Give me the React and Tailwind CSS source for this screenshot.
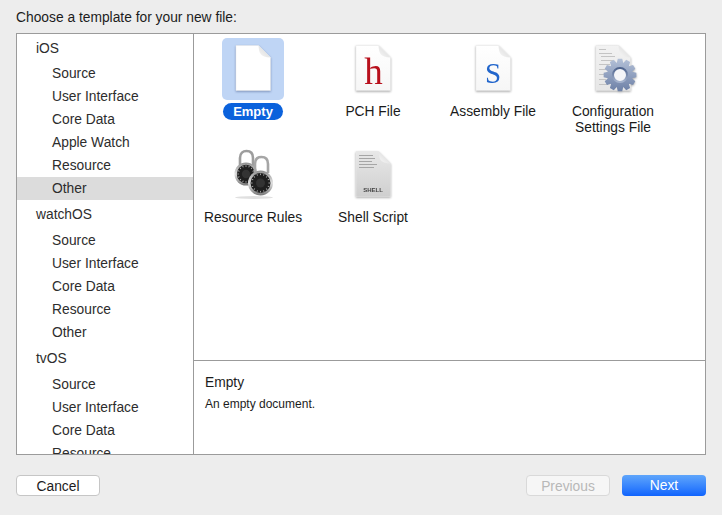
import { useState } from "react";

const font = "font-['Liberation_Sans',Arial,sans-serif]";

const sections = [
  { title: "iOS", header: "h-[28px] pt-[2px]", items: ["Source", "User Interface", "Core Data", "Apple Watch", "Resource", "Other"] },
  { title: "watchOS", header: "h-[29px] pt-[1px]", items: ["Source", "User Interface", "Core Data", "Resource", "Other"] },
  { title: "tvOS", header: "h-[29px] pt-[1px]", items: ["Source", "User Interface", "Core Data", "Resource"] },
];

// Shared sheet of paper with a folded corner
function Sheet({ id, top = "#ffffff", bottom = "#ffffff", shadow = "drop-shadow-[0_1px_1px_rgba(0,0,0,0.35)]", children }) {
  return (
    <svg width="48" height="48" viewBox="0 0 48 48" className={shadow}>
      <defs>
        <linearGradient id={id} x1="0" y1="0" x2="0" y2="1">
          <stop offset="0" stopColor={top} />
          <stop offset="1" stopColor={bottom} />
        </linearGradient>
        <linearGradient id={`${id}-fold`} x1="0" y1="1" x2="1" y2="0">
          <stop offset="0" stopColor="#f8f8f8" />
          <stop offset="1" stopColor="#d4d4d4" />
        </linearGradient>
      </defs>
      <path d="M7 .5H29.5L41.5 12.5V45.5H7Z" fill={`url(#${id})`} stroke="#e8e8e8" strokeWidth=".5" />
      <path d="M29.5 .5C30 8 31 12 41.5 12.5Z" fill={`url(#${id}-fold)`} />
      {children}
    </svg>
  );
}

function gearPath(cx, cy, outer, inner, teeth) {
  const pts = [];
  const step = (Math.PI * 2) / teeth;
  for (let i = 0; i < teeth; i++) {
    const a = i * step;
    const offs = [
      [-0.5, inner],
      [-0.26, outer],
      [0.26, outer],
      [0.5, inner],
    ];
    offs.forEach(([o, r]) => {
      const t = a + o * step;
      pts.push(`${(cx + Math.cos(t) * r).toFixed(2)} ${(cy + Math.sin(t) * r).toFixed(2)}`);
    });
  }
  return `M${pts.join("L")}Z`;
}

function TextLines({ rows, color = "#c4c4c4" }) {
  return rows.map(([x, y, w], i) => (
    <rect key={i} x={x} y={y} width={w} height="1" fill={color} />
  ));
}

function ConfigIcon() {
  return (
    <Sheet id="cfg" top="#f2f2f2" bottom="#e6e6e6">
      <TextLines
        rows={[
          [10, 4, 7], [10, 8, 13], [12, 11, 14], [12, 15, 12], [10, 19, 11],
          [10, 24, 7], [10, 29, 6], [10, 34, 7], [10, 39, 9],
        ]}
      />
      <defs>
        <linearGradient id="gear" x1="0" y1="0" x2="0" y2="1">
          <stop offset="0" stopColor="#b4c1d8" />
          <stop offset="1" stopColor="#6d80a6" />
        </linearGradient>
        <linearGradient id="gearRing" x1="0" y1="0" x2="0" y2="1">
          <stop offset="0" stopColor="#4d628c" />
          <stop offset="1" stopColor="#a7b5cf" />
        </linearGradient>
      </defs>
      <path d={gearPath(31, 30, 16.5, 12.5, 12)} fill="url(#gear)" />
      <circle cx="31" cy="30" r="7" fill="#f4f5f8" stroke="url(#gearRing)" strokeWidth="2" />
    </Sheet>
  );
}

function Dial({ cx, cy, r, id }) {
  const ticks = [...Array(16)];
  return (
    <g>
      <circle cx={cx} cy={cy} r={r} fill={`url(#${id})`} />
      <circle cx={cx} cy={cy} r={r * 0.8} fill="#1f1f1f" />
      {ticks.map((_, i) => (
        <rect
          key={i}
          x={cx - 0.4}
          y={cy - r * 0.76}
          width=".8"
          height="1.6"
          fill="#bdbdbd"
          transform={`rotate(${i * 22.5} ${cx} ${cy})`}
        />
      ))}
      <circle cx={cx} cy={cy} r={r * 0.36} fill="#333333" />
    </g>
  );
}

function LocksIcon() {
  return (
    <svg width="48" height="48" viewBox="0 0 48 48" className="overflow-visible">
      <defs>
        <linearGradient id="dialRim" x1="0" y1="0" x2="0" y2="1">
          <stop offset="0" stopColor="#8f8f8f" />
          <stop offset=".5" stopColor="#e2e2e2" />
          <stop offset="1" stopColor="#777777" />
        </linearGradient>
      </defs>
      <ellipse cx="25" cy="46.5" rx="19" ry="1.5" fill="#e0e0e0" />
      <path d="M11 18V7C11 2 14 0 17.500 0S24 2 24 7V16" fill="none" stroke="#9d9d9d" strokeWidth="2.6" />
      <Dial cx={17} cy={23} r={11.500} id="dialRim" />
      <path d="M26 26V13C26 8 29 6 32.500 6S39 8 39 13V22" fill="none" stroke="#a6a6a6" strokeWidth="2.6" />
      <Dial cx={31.500} cy={32} r={12.500} id="dialRim" />
    </svg>
  );
}

const templates = [
  {
    name: ["Empty"],
    icon: <Sheet id="empty" shadow="drop-shadow-[0_1px_1px_rgba(40,60,110,0.45)]" />,
  },
  {
    name: ["PCH File"],
    icon: (
      <Sheet id="pch" top="#ffffff" bottom="#f6f6f6">
        <text x="24.500" y="39" textAnchor="middle" fontSize="37" fontFamily="Liberation Serif, serif" fill="#b8101c">h</text>
      </Sheet>
    ),
  },
  {
    name: ["Assembly File"],
    icon: (
      <Sheet id="asm" top="#ffffff" bottom="#f6f6f6">
        <text x="24" y="38" textAnchor="middle" fontSize="29" fontFamily="Liberation Serif, serif" fill="#2266cc">S</text>
      </Sheet>
    ),
  },
  { name: ["Configuration", "Settings File"], icon: <ConfigIcon /> },
  { name: ["Resource Rules"], icon: <LocksIcon /> },
  {
    name: ["Shell Script"],
    icon: (
      <Sheet id="shell" top="#e8e8e8" bottom="#cfcfcf">
        <TextLines rows={[[10, 4, 14], [10, 7, 16], [10, 10, 13], [10, 13, 18], [10, 16, 15]]} color="#a6a6a6" />
        <text x="24" y="41" textAnchor="middle" fontSize="6" fontWeight="bold" fontFamily="Liberation Sans, sans-serif" fill="#444444">SHELL</text>
      </Sheet>
    ),
  },
];

function Sidebar() {
  return (
    <div className="w-[177px] shrink-0 h-full overflow-hidden border-r border-[#9b9b9b] text-[13.8px] text-[#2d2d2d]">
      {sections.map((section, s) => (
        <div key={section.title}>
          <div className={`${section.header} pl-[19px] flex items-center`}>{section.title}</div>
          {section.items.map((item) => (
            <div
              key={item}
              className={`h-[23px] pl-[35px] pt-[2px] flex items-center ${
                s === 0 && item === "Other" ? "bg-[#dcdcdc]" : ""
              }`}
            >
              {item}
            </div>
          ))}
        </div>
      ))}
    </div>
  );
}

function TemplateTile({ template, selected, onSelect }) {
  return (
    <button onClick={onSelect} className="w-[120px] h-[106px] flex flex-col items-center text-[13.8px] leading-4 text-[#1a1a1a]">
      <div className={`w-[62px] h-[62px] mt-[4px] rounded-[5px] flex justify-center pt-[7px] ${selected ? "bg-[#bfd5f5]" : ""}`}>
        {template.icon}
      </div>
      <div className="mt-[3px] text-center">
        {template.name.map((line) => (
          <div
            key={line}
            className={
              selected
                ? "w-[60px] h-[17px] leading-[17px] rounded-full bg-[#0b62dc] text-white text-[13px] font-bold"
                : "h-4 first:mt-[1px] whitespace-nowrap"
            }
          >
            {line}
          </div>
        ))}
      </div>
    </button>
  );
}

export default function App() {
  const [selected, setSelected] = useState(0);

  return (
    <div className={`w-[722px] h-[515px] bg-[#ededed] px-4 flex flex-col overflow-hidden ${font}`}>
      <div className="h-[33px] pt-[10px] text-[13.8px] leading-4 text-[#1c1c1c]">Choose a template for your new file:</div>

      <div className="h-[422px] border border-[#9b9b9b] bg-white flex">
        <Sidebar />
        <div className="flex-1 flex flex-col min-w-0">
          <div className="h-[326px] -ml-px flex flex-wrap content-start">
            {templates.map((t, i) => (
              <TemplateTile key={t.name[0]} template={t} selected={selected === i} onSelect={() => setSelected(i)} />
            ))}
          </div>
          <div className="flex-1 border-t border-[#9b9b9b] pl-[11px] pt-[14px] text-[#1c1c1c]">
            <div className="text-[13.8px] leading-4">{templates[selected].name.join(" ")}</div>
            <div className="mt-[6px] text-[12px] leading-[14px]">An empty document.</div>
          </div>
        </div>
      </div>

      <div className="mt-5 flex justify-between text-[13.8px]">
        <button className="w-[84px] h-[21px] pt-px rounded-[4px] bg-white border border-[#c6c6c6] text-[#1c1c1c]">Cancel</button>
        <div className="flex gap-3">
          <button className="w-[84px] h-[21px] pt-px rounded-[4px] bg-[#f6f6f6] border border-[#d9d9d9] text-[#b8b8b8]" disabled>Previous</button>
          <button className="w-[84px] h-[21px] pt-px rounded-[4px] bg-gradient-to-b from-[#5fa5fb] to-[#0f63fd] text-white">Next</button>
        </div>
      </div>
    </div>
  );
}
